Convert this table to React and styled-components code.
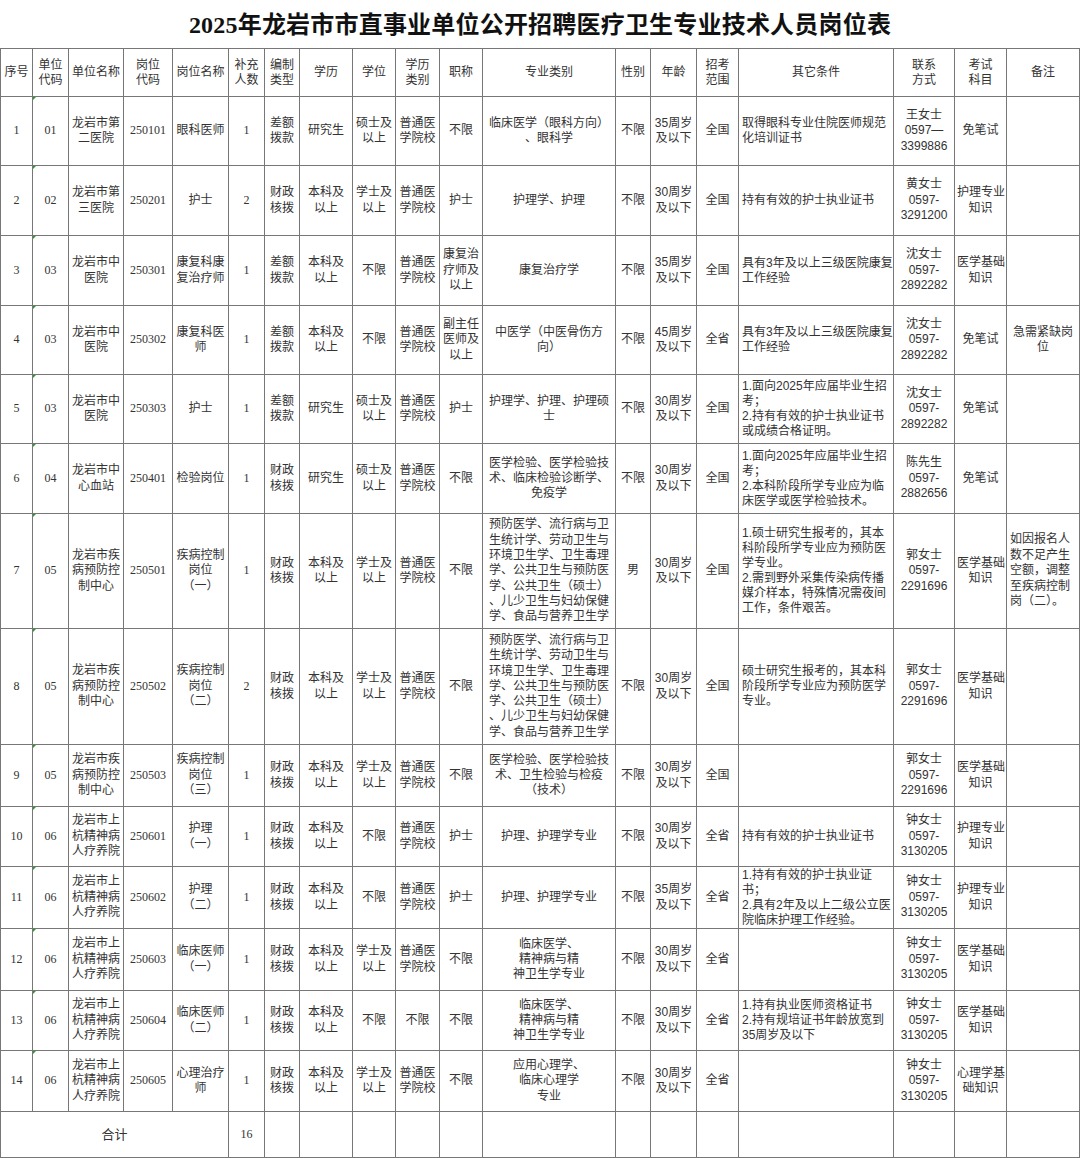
import React from "react";
import styled, { createGlobalStyle, css } from "styled-components";

const GlobalStyle = createGlobalStyle`
	html, body {
		margin: 0;
		padding: 0;
		background: #fff;
	}
	body {
		font-family: "Liberation Sans", "Noto Sans CJK SC", sans-serif;
		color: #333;
	}
`;

const SERIF = `"Liberation Serif", "Noto Sans CJK SC", serif`;
const SANS = `"Liberation Sans", "Noto Sans CJK SC", sans-serif`;

// column widths read off the sheet
const columns = [
	{ w: 32, serif: true },
	{ w: 36, serif: true, mark: true },
	{ w: 55 },
	{ w: 49, serif: true },
	{ w: 56 },
	{ w: 36, serif: true },
	{ w: 35 },
	{ w: 53 },
	{ w: 43 },
	{ w: 44 },
	{ w: 43 },
	{ w: 133, lh: 15.3 },
	{ w: 35 },
	{ w: 46 },
	{ w: 42 },
	{ w: 155, align: "left", lh: 15 },
	{ w: 61 },
	{ w: 52 },
	{ w: 73 },
];

const headers = [
	"序号", "单位\n代码", "单位名称", "岗位\n代码", "岗位名称", "补充\n人数", "编制\n类型",
	"学历", "学位", "学历\n类别", "职称", "专业类别", "性别", "年龄", "招考\n范围",
	"其它条件", "联系\n方式", "考试\n科目", "备注",
];

const preventive =
	"预防医学、流行病与卫\n生统计学、劳动卫生与\n环境卫生学、卫生毒理\n学、公共卫生与预防医\n学、公共卫生（硕士）\n、儿少卫生与妇幼保健\n学、食品与营养卫生学";
const shanghang = "龙岩市上\n杭精神病\n人疗养院";
const cdc = "龙岩市疾\n病预防控\n制中心";
const school = "普通医\n学院校";

const rows = [
	{ h: 69, cells: ["1", "01", "龙岩市第\n二医院", "250101", "眼科医师", "1", "差额\n拨款", "研究生", "硕士及\n以上", school, "不限", "临床医学（眼科方向）\n、眼科学", "不限", "35周岁\n及以下", "全国", "取得眼科专业住院医师规范\n化培训证书", "王女士\n0597—\n3399886", "免笔试", ""] },
	{ h: 70, cells: ["2", "02", "龙岩市第\n三医院", "250201", "护士", "2", "财政\n核拨", "本科及\n以上", "学士及\n以上", school, "护士", "护理学、护理", "不限", "30周岁\n及以下", "全国", "持有有效的护士执业证书", "黄女士\n0597-\n3291200", "护理专业\n知识", ""] },
	{ h: 70, cells: ["3", "03", "龙岩市中\n医院", "250301", "康复科康\n复治疗师", "1", "差额\n拨款", "本科及\n以上", "不限", school, "康复治\n疗师及\n以上", "康复治疗学", "不限", "35周岁\n及以下", "全国", "具有3年及以上三级医院康复\n工作经验", "沈女士\n0597-\n2892282", "医学基础\n知识", ""] },
	{ h: 69, cells: ["4", "03", "龙岩市中\n医院", "250302", "康复科医\n师", "1", "差额\n拨款", "本科及\n以上", "不限", school, "副主任\n医师及\n以上", "中医学（中医骨伤方\n向）", "不限", "45周岁\n及以下", "全省", "具有3年及以上三级医院康复\n工作经验", "沈女士\n0597-\n2892282", "免笔试", "急需紧缺岗\n位"] },
	{ h: 69, cells: ["5", "03", "龙岩市中\n医院", "250303", "护士", "1", "差额\n拨款", "研究生", "硕士及\n以上", school, "护士", "护理学、护理、护理硕\n士", "不限", "30周岁\n及以下", "全国", "1.面向2025年应届毕业生招\n考；\n2.持有有效的护士执业证书\n或成绩合格证明。", "沈女士\n0597-\n2892282", "免笔试", ""] },
	{ h: 70, cells: ["6", "04", "龙岩市中\n心血站", "250401", "检验岗位", "1", "财政\n核拨", "研究生", "硕士及\n以上", school, "不限", "医学检验、医学检验技\n术、临床检验诊断学、\n免疫学", "不限", "30周岁\n及以下", "全国", "1.面向2025年应届毕业生招\n考；\n2.本科阶段所学专业应为临\n床医学或医学检验技术。", "陈先生\n0597-\n2882656", "免笔试", ""] },
	{ h: 115, noteLeft: true, cells: ["7", "05", cdc, "250501", "疾病控制\n岗位\n（一）", "1", "财政\n核拨", "本科及\n以上", "学士及\n以上", school, "不限", preventive, "男", "30周岁\n及以下", "全国", "1.硕士研究生报考的，其本\n科阶段所学专业应为预防医\n学专业。\n2.需到野外采集传染病传播\n媒介样本，特殊情况需夜间\n工作，条件艰苦。", "郭女士\n0597-\n2291696", "医学基础\n知识", "如因报名人\n数不足产生\n空额，调整\n至疾病控制\n岗（二）。"] },
	{ h: 116, cells: ["8", "05", cdc, "250502", "疾病控制\n岗位\n（二）", "2", "财政\n核拨", "本科及\n以上", "学士及\n以上", school, "不限", preventive, "不限", "30周岁\n及以下", "全国", "硕士研究生报考的，其本科\n阶段所学专业应为预防医学\n专业。", "郭女士\n0597-\n2291696", "医学基础\n知识", ""] },
	{ h: 62, cells: ["9", "05", cdc, "250503", "疾病控制\n岗位\n（三）", "1", "财政\n核拨", "本科及\n以上", "学士及\n以上", school, "不限", "医学检验、医学检验技\n术、卫生检验与检疫\n（技术）", "不限", "30周岁\n及以下", "全国", "", "郭女士\n0597-\n2291696", "医学基础\n知识", ""] },
	{ h: 60, cells: ["10", "06", shanghang, "250601", "护理\n（一）", "1", "财政\n核拨", "本科及\n以上", "不限", school, "护士", "护理、护理学专业", "不限", "30周岁\n及以下", "全省", "持有有效的护士执业证书", "钟女士\n0597-\n3130205", "护理专业\n知识", ""] },
	{ h: 62, cells: ["11", "06", shanghang, "250602", "护理\n（二）", "1", "财政\n核拨", "本科及\n以上", "不限", school, "护士", "护理、护理学专业", "不限", "35周岁\n及以下", "全省", "1.持有有效的护士执业证\n书；\n2.具有2年及以上二级公立医\n院临床护理工作经验。", "钟女士\n0597-\n3130205", "护理专业\n知识", ""] },
	{ h: 62, cells: ["12", "06", shanghang, "250603", "临床医师\n（一）", "1", "财政\n核拨", "本科及\n以上", "学士及\n以上", school, "不限", "临床医学、\n精神病与精\n神卫生学专业", "不限", "30周岁\n及以下", "全省", "", "钟女士\n0597-\n3130205", "医学基础\n知识", ""] },
	{ h: 60, cells: ["13", "06", shanghang, "250604", "临床医师\n（二）", "1", "财政\n核拨", "本科及\n以上", "不限", "不限", "不限", "临床医学、\n精神病与精\n神卫生学专业", "不限", "30周岁\n及以下", "全省", "1.持有执业医师资格证书\n2.持有规培证书年龄放宽到\n35周岁及以下", "钟女士\n0597-\n3130205", "医学基础\n知识", ""] },
	{ h: 61, cells: ["14", "06", shanghang, "250605", "心理治疗\n师", "1", "财政\n核拨", "本科及\n以上", "学士及\n以上", school, "不限", "应用心理学、\n临床心理学\n专业", "不限", "30周岁\n及以下", "全省", "", "钟女士\n0597-\n3130205", "心理学基\n础知识", ""] },
];

export default function App() {
	return (
		<Page>
			<GlobalStyle />
			<Title>2025年龙岩市市直事业单位公开招聘医疗卫生专业技术人员岗位表</Title>
			<Sheet>
				<colgroup>
					{columns.map((c, i) => (
						<col key={i} style={{ width: c.w }} />
					))}
				</colgroup>
				<thead>
					<Row $h={48}>
						{headers.map((h, i) => (
							<HeadCell key={i}>{h}</HeadCell>
						))}
					</Row>
				</thead>
				<tbody>
					{rows.map((r, ri) => (
						<Row key={ri} $h={r.h}>
							{r.cells.map((text, ci) => {
								const c = columns[ci];
								const left = c.align === "left" || (ci === 18 && r.noteLeft);
								return (
									<Cell
										key={ci}
										$left={left}
										$serif={c.serif}
										$lh={c.lh}
										$mark={c.mark}
									>
										{text}
									</Cell>
								);
							})}
						</Row>
					))}
					<Row $h={46}>
						<Cell colSpan={5} $total>
							合计
						</Cell>
						<Cell $serif>16</Cell>
						{columns.slice(6).map((_, i) => (
							<Cell key={i} />
						))}
					</Row>
				</tbody>
			</Sheet>
		</Page>
	);
}

const Page = styled.div`
	width: 1080px;
	background: #fff;
`;

const Title = styled.h1`
	margin: 0;
	height: 48px;
	line-height: 50px;
	text-align: center;
	font-family: ${SERIF};
	font-size: 24px;
	font-weight: 700;
	color: #111;
	letter-spacing: 0.2px;
`;

const Sheet = styled.table`
	width: 1079px;
	table-layout: fixed;
	border-collapse: collapse;
	border: 1px solid #6f6f6f;
`;

const Row = styled.tr`
	height: ${(p) => p.$h}px;
`;

const cellBase = css`
	border: 1px solid #777;
	padding: 0 2px;
	vertical-align: middle;
	font-size: 12px;
	white-space: pre;
	overflow: visible;
	color: #333;
`;

const HeadCell = styled.th`
	${cellBase};
	font-family: ${SANS};
	font-weight: 400;
	text-align: center;
	line-height: 15px;
`;

const Cell = styled.td`
	${cellBase};
	position: relative;
	font-family: ${(p) => (p.$serif ? SERIF : SANS)};
	text-align: ${(p) => (p.$left ? "left" : "center")};
	padding-left: ${(p) => (p.$left ? "3px" : "2px")};
	line-height: ${(p) => (p.$lh ? p.$lh : 15.5)}px;
	${(p) =>
		p.$total &&
		css`
			font-size: 13px;
		`}
	${(p) =>
		p.$mark &&
		css`
			&::before {
				content: "";
				position: absolute;
				top: 0;
				left: 0;
				border-top: 3px solid #2e9a2e;
				border-right: 3px solid transparent;
			}
		`}
`;
